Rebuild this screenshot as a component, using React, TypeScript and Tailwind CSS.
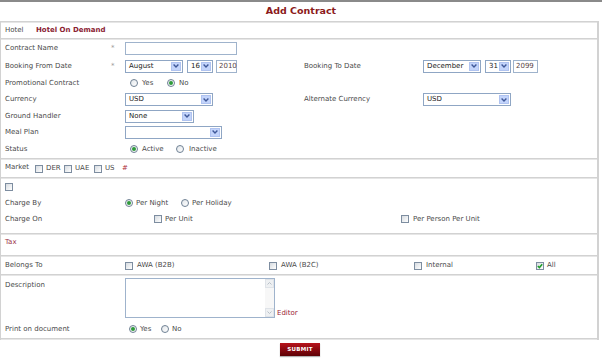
import React from "react";

function Chevron() {
  return (
    <svg width="6" height="4" viewBox="0 0 6 4">
      <path d="M0.6 0.6 L3 3 L5.4 0.6" stroke="#3f5898" strokeWidth="1.4" fill="none" />
    </svg>
  );
}

function Select({ className, value }: { className: string; value: string }) {
  return (
    <div className={"flex h-[13px] border border-[#8fa6c4] bg-white items-stretch " + className}>
      <span className="flex-1 pl-[3px] leading-[11px] text-[7px] text-[#222] overflow-hidden whitespace-nowrap">{value}</span>
      <span className="w-[10px] my-[1px] mr-[1px] bg-[#c3d4fb] border border-[#b0c3f0] flex items-center justify-center">
        <Chevron />
      </span>
    </div>
  );
}

function TextBox({ className, value }: { className: string; value?: string }) {
  return (
    <div className={"h-[13px] border border-[#9fb3cc] bg-white pl-[2px] leading-[11px] text-[7px] text-[#5a4646] " + className}>
      {value}
    </div>
  );
}

function Radio({ checked }: { checked?: boolean }) {
  return (
    <span className="inline-flex shrink-0 w-[8px] h-[8px] rounded-full border border-[#6f8194] bg-linear-to-br from-[#e2e6ea] to-white items-center justify-center">
      {checked && <span className="w-[4px] h-[4px] rounded-full bg-[#2f9a3a]" />}
    </span>
  );
}

function Check({ checked }: { checked?: boolean }) {
  return (
    <span className="inline-flex shrink-0 w-[8px] h-[8px] border border-[#7d8da0] bg-linear-to-br from-[#d6dbe0] to-white items-center justify-center">
      {checked && (
        <svg width="6" height="6" viewBox="0 0 6 6">
          <path d="M0.8 3 L2.4 4.6 L5.2 1.2" stroke="#1e9e2a" strokeWidth="1.5" fill="none" />
        </svg>
      )}
    </span>
  );
}

function Line() {
  return <div className="h-[2px] bg-[#d2d2d2] border-b border-[#e6e6e6]" />;
}

function Label({ text, star }: { text: string; star?: boolean }) {
  return (
    <>
      <div className="w-[110px] pl-[4px] whitespace-nowrap">{text}</div>
      <div className="w-[14px] text-[#9a9a9a] leading-none">{star ? "*" : ""}</div>
    </>
  );
}

export default function App() {
  return (
    <div className="w-[602px] h-[358px] bg-white text-[7px] text-[#4a4a4a] font-['DejaVu_Sans',sans-serif] overflow-hidden">
      <div className="h-[2px] bg-[#8a8a8a]" />
      <div className="h-[19px] flex items-center justify-center text-[9.5px] font-bold text-[#8b1a1a]">Add Contract</div>
      <div className="w-[599px] border-l border-r-2 border-[#d2d2d2]">
        <Line />
        {/* Hotel */}
        <div className="h-[15px] flex items-center">
          <div className="w-[35px] pl-[4px]">Hotel</div>
          <div className="font-bold text-[#8b2232]">Hotel On Demand</div>
        </div>
        <Line />
        {/* Main */}
        <div className="h-[118px]">
          <div className="h-[17px] flex items-center">
            <Label text="Contract Name" star />
            <TextBox className="w-[112px]" />
          </div>
          <div className="h-[18px] flex items-center">
            <Label text="Booking From Date" star />
            <div className="w-[179px] flex items-center">
              <Select className="w-[58px]" value="August" />
              <Select className="w-[26px] ml-[4px]" value="16" />
              <TextBox className="w-[21px] ml-[3px]" value="2010" />
            </div>
            <div className="w-[119px]">Booking To Date</div>
            <Select className="w-[58px]" value="December" />
            <Select className="w-[26px] ml-[4px]" value="31" />
            <TextBox className="w-[25px] ml-[2px]" value="2099" />
          </div>
          <div className="h-[16px] flex items-center">
            <Label text="Promotional Contract" />
            <div className="flex items-center pl-[5px]">
              <Radio />
              <span className="ml-[4px] w-[25px]">Yes</span>
              <Radio checked />
              <span className="ml-[4px]">No</span>
            </div>
          </div>
          <div className="h-[17px] flex items-center">
            <Label text="Currency" />
            <div className="w-[179px]">
              <Select className="w-[88px]" value="USD" />
            </div>
            <div className="w-[119px]">Alternate Currency</div>
            <Select className="w-[88px]" value="USD" />
          </div>
          <div className="h-[16px] flex items-center">
            <Label text="Ground Handler" />
            <Select className="w-[69px]" value="None" />
          </div>
          <div className="h-[16px] flex items-center">
            <Label text="Meal Plan" />
            <Select className="w-[97px]" value="" />
          </div>
          <div className="h-[18px] flex items-center">
            <Label text="Status" />
            <div className="flex items-center pl-[5px]">
              <Radio checked />
              <span className="ml-[4px] w-[34px]">Active</span>
              <Radio />
              <span className="ml-[5px]">Inactive</span>
            </div>
          </div>
        </div>
        <Line />
        {/* Market */}
        <div className="h-[17px] flex items-center">
          <div className="w-[34px] pl-[4px] -mt-[2px]">Market</div>
          <Check />
          <span className="ml-[3px] w-[18px]">DER</span>
          <Check />
          <span className="ml-[3px] w-[19px]">UAE</span>
          <Check />
          <span className="ml-[3px] w-[17px]">US</span>
          <span className="text-[#b0303a]">#</span>
        </div>
        <Line />
        {/* Charge */}
        <div className="h-[54px]">
          <div className="h-[16px] flex items-center pl-[4px]">
            <Check />
          </div>
          <div className="h-[16px] flex items-center">
            <Label text="Charge By" />
            <Radio checked />
            <span className="ml-[3px] w-[45px]">Per Night</span>
            <Radio />
            <span className="ml-[3px]">Per Holiday</span>
          </div>
          <div className="h-[16px] flex items-center">
            <Label text="Charge On" />
            <div className="w-[276px] pl-[29px] flex items-center">
              <Check />
              <span className="ml-[3px]">Per Unit</span>
            </div>
            <Check />
            <span className="ml-[4px]">Per Person Per Unit</span>
          </div>
        </div>
        <Line />
        {/* Tax */}
        <div className="h-[20px]">
          <div className="h-[14px] flex items-center pl-[4px] text-[#9b3346]">Tax</div>
        </div>
        <Line />
        {/* Belongs */}
        <div className="h-[17px] flex items-center">
          <Label text="Belongs To" />
          <div className="w-[144px] flex items-center">
            <Check />
            <span className="ml-[4px]">AWA (B2B)</span>
          </div>
          <div className="w-[145px] flex items-center">
            <Check />
            <span className="ml-[4px]">AWA (B2C)</span>
          </div>
          <div className="w-[122px] flex items-center">
            <Check />
            <span className="ml-[4px]">Internal</span>
          </div>
          <div className="flex items-center">
            <Check checked />
            <span className="ml-[3px]">All</span>
          </div>
        </div>
        <Line />
        {/* Description */}
        <div className="h-[44px] flex pt-[2px]">
          <div className="w-[124px] pl-[4px] pt-[2px]">Description</div>
          <div className="w-[150px] h-[40px] border border-[#9fb3cc] bg-white flex justify-end">
            <div className="w-[9px] h-full flex flex-col justify-between bg-[#f7f7f7]">
              <div className="h-[9px] bg-[#eef0f2] border border-[#dfe3e8] flex items-center justify-center">
                <svg width="5" height="3" viewBox="0 0 5 3"><path d="M0.5 2.5 L2.5 0.5 L4.5 2.5" stroke="#b8c0c8" strokeWidth="1" fill="none" /></svg>
              </div>
              <div className="h-[9px] bg-[#eef0f2] border border-[#dfe3e8] flex items-center justify-center">
                <svg width="5" height="3" viewBox="0 0 5 3"><path d="M0.5 0.5 L2.5 2.5 L4.5 0.5" stroke="#b8c0c8" strokeWidth="1" fill="none" /></svg>
              </div>
            </div>
          </div>
          <div className="self-end ml-[2px] mb-[2px] text-[#9b2335]">Editor</div>
        </div>
        <div className="h-[18px] flex items-center">
          <Label text="Print on document" />
          <div className="flex items-center pl-[4px]">
            <Radio checked />
            <span className="ml-[3px] w-[21px]">Yes</span>
            <Radio />
            <span className="ml-[3px]">No</span>
          </div>
        </div>
        <Line />
      </div>
      <div className="flex justify-center pt-[3px] pr-[2px]">
        <div className="w-[40px] h-[13px] bg-linear-to-b from-[#b8141c] to-[#5e0206] flex items-center justify-center text-white font-bold text-[5.5px] tracking-[0.3px] shadow-[0_1px_1px_rgba(0,0,0,0.3)]">
          SUBMIT
        </div>
      </div>
    </div>
  );
}
